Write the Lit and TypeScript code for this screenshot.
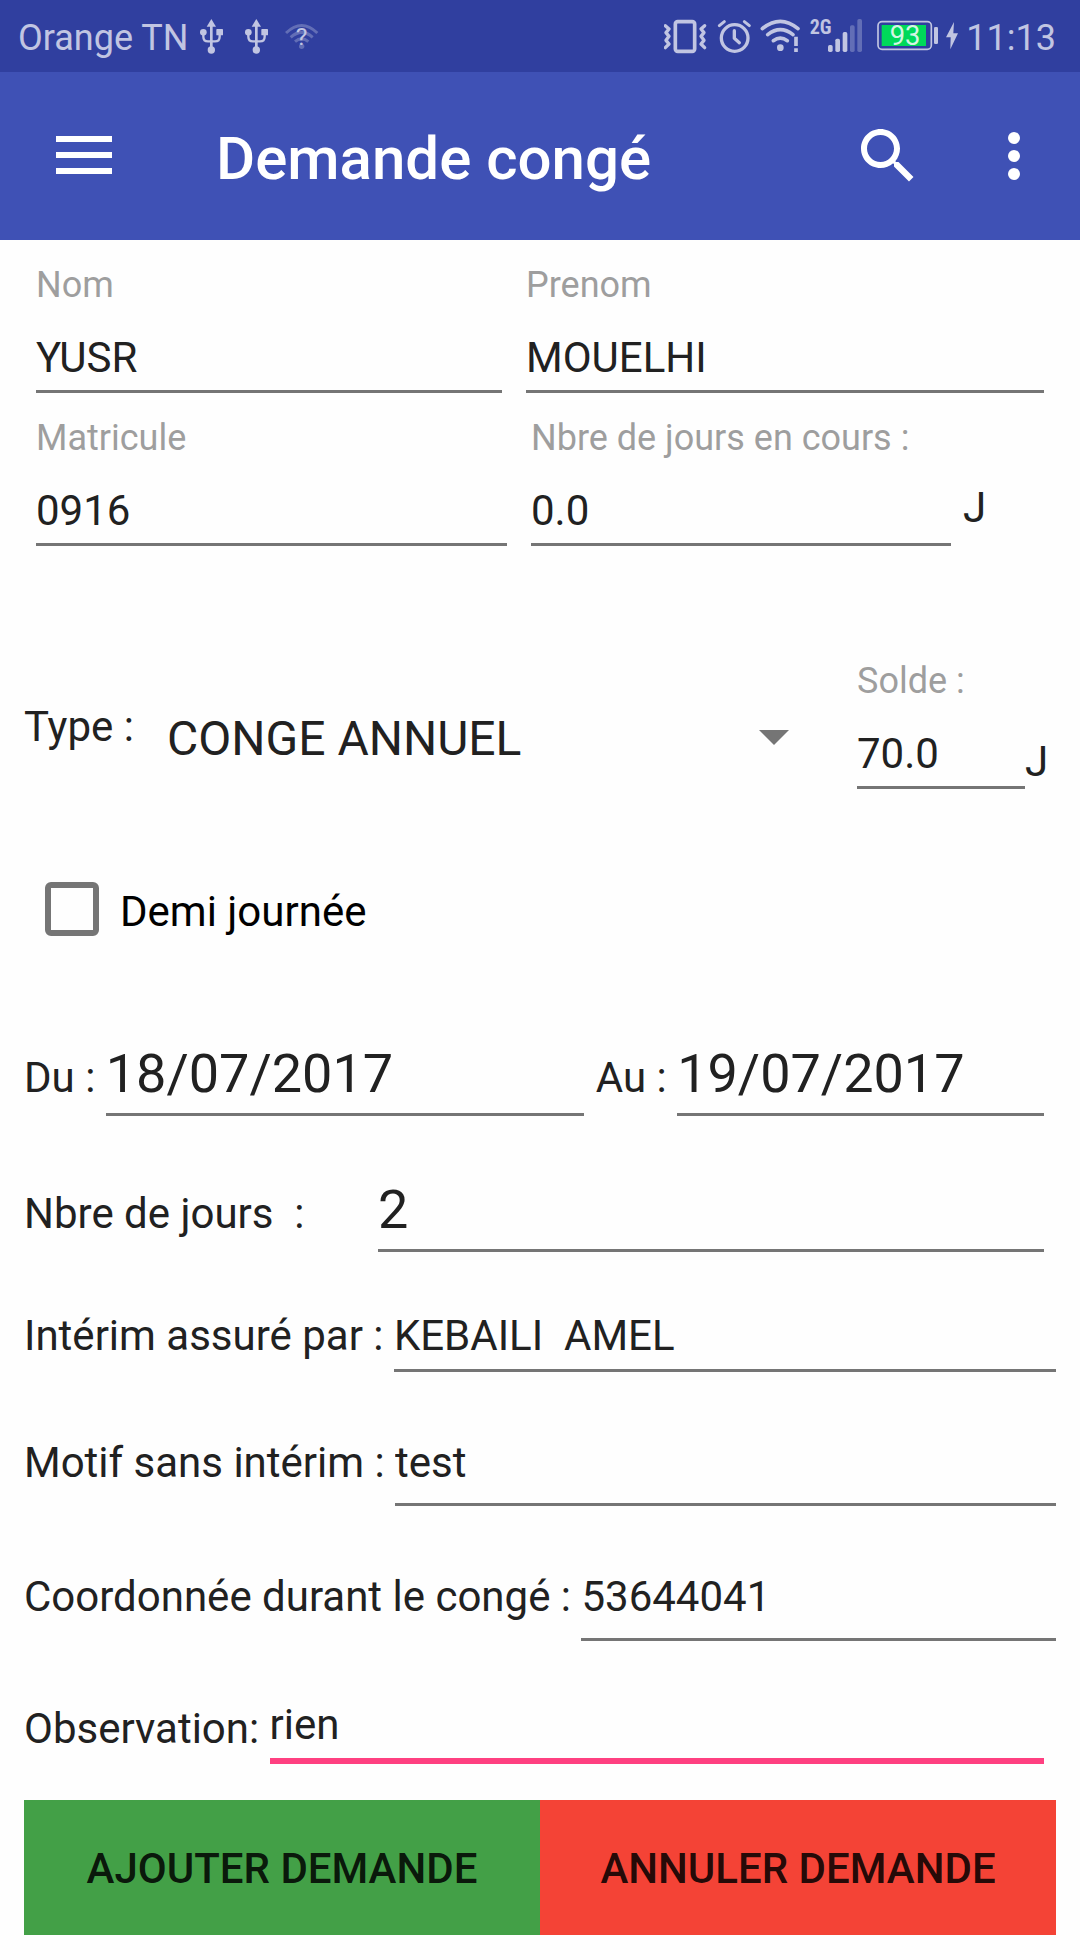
import { LitElement, html, css, svg } from "lit";
import { customElement, property, state } from "lit/decorators.js";

const usbIcon = () => html`
  <svg class="glyph" width="30" height="72" viewBox="585 0 90 216" aria-hidden="true">
    <path class="fill" d="M634 57 648 80H620Z" />
    <circle class="fill" cx="634" cy="150" r="11" />
    <circle class="fill" cx="610" cy="97" r="10" />
    <rect class="fill" x="649" y="87" width="20" height="19" rx="2" />
    <path class="line" stroke-width="8" d="M634 74V146" />
    <path class="line" stroke-width="7" d="M610 100V110Q610 124 624 124H645Q659 124 659 110V100" />
  </svg>
`;

@customElement("status-bar")
export class StatusBar extends LitElement {
  @property() carrier = "";
  @property() time = "";
  @property({ type: Number }) battery = 0;

  static styles = css`
    :host {
      display: flex;
      align-items: center;
      justify-content: space-between;
      height: 72px;
      padding: 0 24px 0 18px;
      background: #303f9f;
      color: #c1c5e2;
      font-size: 36px;
      line-height: 44px;
    }
    .side {
      display: flex;
      align-items: center;
      gap: 8px;
    }
    .icons {
      display: flex;
      gap: 15px;
      margin-left: -1px;
    }
    .text {
      padding-top: 4px;
    }
    .glyph {
      display: block;
      flex: none;
    }
    .fill {
      fill: #c1c5e2;
    }
    .line {
      fill: none;
      stroke: #c1c5e2;
    }
    .round {
      stroke-linecap: round;
      stroke-linejoin: round;
    }
    .faint {
      opacity: 0.35;
    }
    .level {
      fill: #00d95a;
    }
    .percent {
      fill: #d5f5e4;
      font-size: 82px;
    }
    .query {
      fill: #c1c5e2;
      font-size: 74px;
    }
    .network {
      fill: #c1c5e2;
      font-family: "Roboto Condensed", "Liberation Sans Narrow", Roboto, sans-serif;
      font-size: 60px;
      font-weight: 700;
    }
  `;

  render() {
    return html`
      <div class="side">
        <span class="text">${this.carrier}</span>
        <div class="icons">
          ${usbIcon()} ${usbIcon()}
          <svg class="glyph" width="34" height="72" viewBox="854 0 102 216" aria-hidden="true">
            <g class="line faint" stroke-width="9">
              <path d="M857 99Q904 54 951 99" />
              <path d="M871 112Q904 82 937 112" />
              <path d="M884 125Q904 108 924 125" />
            </g>
            <circle class="fill faint" cx="904" cy="139" r="8" />
            <text class="query" x="904" y="134" text-anchor="middle">?</text>
          </svg>
        </div>
      </div>
      <div class="side">
        <svg class="glyph" width="44" height="72" viewBox="72 0 132 216" aria-hidden="true">
          <rect class="line" stroke-width="11" x="106" y="65" width="58" height="89" rx="7" />
          <g class="line round" stroke-width="10">
            <path d="M76 77 87 87 78 98 87 109 78 121 87 132 76 143" />
            <path d="M194 77 183 87 192 98 183 109 192 121 183 132 194 143" />
          </g>
        </svg>
        <svg class="glyph" width="36" height="72" viewBox="228 0 108 216" aria-hidden="true">
          <circle class="line" stroke-width="10" cx="284" cy="114" r="40" />
          <path class="line round" stroke-width="10" d="M283 92V115L298 128" />
          <path class="line round" stroke-width="9" d="M238 77 253 65M328 77 313 65" />
        </svg>
        <svg class="glyph" width="40" height="72" viewBox="360 0 120 216" aria-hidden="true">
          <g class="line round" stroke-width="11">
            <path d="M367 86Q421 42 474 86" />
            <path d="M383 104Q421 74 459 104" />
            <path d="M400 122Q421 107 442 122" />
          </g>
          <circle class="fill" cx="421" cy="143" r="10" />
          <path class="line" stroke-width="11" d="M468 110V138M468 145V156" />
        </svg>
        <svg class="glyph" width="56" height="72" viewBox="504 0 168 216" aria-hidden="true">
          <text class="network" x="509" y="101">2G</text>
          <rect class="fill" x="564" y="135" width="14" height="21" rx="5" />
          <rect class="fill" x="586" y="116" width="14" height="40" rx="5" />
          <rect class="fill" x="608" y="96" width="14" height="60" rx="5" />
          <g class="faint">
            <rect class="fill" x="630" y="76" width="14" height="80" rx="5" />
            <rect class="fill" x="652" y="57" width="14" height="99" rx="5" />
          </g>
        </svg>
        <svg class="glyph" width="66" height="72" viewBox="696 0 198 216" aria-hidden="true">
          <rect class="line" stroke-width="5" x="714" y="65" width="160" height="83" rx="12" />
          <rect class="level" x="725" y="75" width="133" height="63" />
          <rect class="fill" x="882" y="81" width="12" height="51" rx="4" />
          <text class="percent" x="795" y="136" text-anchor="middle">${this.battery}</text>
        </svg>
        <svg class="glyph" width="12" height="72" viewBox="918 0 36 216" aria-hidden="true">
          <path class="fill" d="M942 66 918 112H932L931 148 954 100H940Z" />
        </svg>
        <span class="text">${this.time}</span>
      </div>
    `;
  }
}

@customElement("tool-bar")
export class ToolBar extends LitElement {
  @property() heading = "";

  static styles = css`
    :host {
      display: flex;
      align-items: center;
      height: 168px;
      padding: 0 30px 0 48px;
      box-sizing: border-box;
      background: #3f51b5;
      color: #fff;
    }
    .title {
      flex: 1;
      margin: 0;
      padding: 6px 0 0 96px;
      font-size: 60px;
      font-weight: 500;
      line-height: 72px;
    }
    .actions {
      display: flex;
      gap: 54px;
    }
    .action {
      display: block;
      padding: 0;
      border: 0;
      background: none;
      color: inherit;
    }
    .icon {
      display: block;
      width: 72px;
      height: 72px;
      fill: currentColor;
    }
  `;

  private button(label: string, shape: unknown) {
    return html`
      <button class="action" type="button" aria-label=${label}>
        <svg class="icon" viewBox="0 0 72 72" aria-hidden="true">${shape}</svg>
      </button>
    `;
  }

  render() {
    return html`
      ${this.button("Menu", svg`<path d="M8 16H64V22H8ZM8 32H64V38H8ZM8 48H64V54H8Z" />`)}
      <h1 class="title">${this.heading}</h1>
      <div class="actions">
        ${this.button(
          "Rechercher",
          svg`<path transform="scale(3)" d="M15.5 14h-.79l-.28-.27C15.41 12.59 16 11.11 16 9.5 16 5.91 13.09 3 9.5 3S3 5.91 3 9.5 5.91 16 9.5 16c1.61 0 3.09-.59 4.23-1.57l.27.28v.79l5 4.99L20.49 19l-4.99-5zm-6 0C7.01 14 5 11.99 5 9.5S7.01 5 9.5 5 14 7.01 14 9.5 11.99 14 9.5 14z" />`
        )}
        ${this.button(
          "Plus",
          svg`<circle cx="36" cy="18" r="6" /><circle cx="36" cy="36" r="6" /><circle cx="36" cy="54" r="6" />`
        )}
      </div>
    `;
  }
}

@customElement("app-root")
export class AppRoot extends LitElement {
  @state() private halfDay = false;

  static styles = css`
    :host {
      display: block;
      min-height: 100vh;
      background: #fefefe;
      color: #212121;
      font-family: Roboto, "Liberation Sans", sans-serif;
      font-size: 42px;
      line-height: 48px;
    }
    .form {
      display: flex;
      flex-direction: column;
      padding: 24px;
    }
    .row {
      display: flex;
      align-items: flex-end;
    }
    .inset {
      padding-right: 12px;
    }
    .indent {
      padding-left: 12px;
    }
    .wide {
      gap: 24px;
    }
    .identity {
      margin-bottom: 24px;
    }
    .kind {
      align-items: flex-start;
      margin-top: 114px;
    }
    .half {
      margin-top: 93px;
      padding-left: 21px;
      gap: 21px;
      color: #000;
    }
    .dates {
      align-items: baseline;
      margin-top: 105px;
    }
    .line {
      align-items: baseline;
      margin-top: 60px;
    }
    .spaced {
      margin-top: 67px;
    }
    .total-row,
    .remark {
      margin-top: 61px;
    }
    .field {
      display: flex;
      flex-direction: column;
      gap: 28px;
      min-width: 0;
    }
    .caption {
      color: #9e9e9e;
      font-size: 36px;
      line-height: 42px;
      white-space: nowrap;
    }
    .label {
      flex: none;
      white-space: pre;
    }
    .input {
      flex: 1 1 0;
      width: 100%;
      min-width: 0;
      height: 59px;
      box-sizing: border-box;
      margin: 0;
      padding: 0 0 10px;
      border: 0;
      border-bottom: 3px solid #757575;
      border-radius: 0;
      outline: 0;
      background: none;
      color: inherit;
      font: inherit;
    }
    .field .input {
      flex: none;
    }
    .large {
      height: 75px;
      padding-bottom: 8px;
      font-size: 54px;
      line-height: 64px;
    }
    .tall {
      height: 67px;
      padding-bottom: 18px;
    }
    .active {
      height: 62px;
      border-bottom: 6px solid #ff4081;
    }
    .name {
      flex: 466 1 0;
    }
    .surname {
      flex: 518 1 0;
    }
    .number {
      flex: 471 1 0;
    }
    .count {
      flex: 420 1 0;
    }
    .unit {
      width: 81px;
      padding-bottom: 14px;
    }
    .days {
      gap: 12px;
    }
    .from {
      flex-grow: 477;
    }
    .to {
      flex-grow: 366;
    }
    .until {
      padding-left: 12px;
    }
    .total {
      width: 354px;
    }
    .type {
      padding-top: 43px;
      width: 143px;
      box-sizing: border-box;
    }
    .spinner {
      display: grid;
      flex: 1;
      align-items: center;
      padding-top: 51px;
    }
    .select {
      grid-area: 1 / 1;
      width: 100%;
      margin: 0;
      padding: 0;
      border: 0;
      outline: 0;
      appearance: none;
      background: none;
      color: inherit;
      font: inherit;
      font-size: 48px;
      line-height: 56px;
    }
    .arrow {
      grid-area: 1 / 1;
      justify-self: end;
      pointer-events: none;
      fill: #757575;
    }
    .balance {
      width: 168px;
      margin-left: 68px;
    }
    .after {
      align-self: flex-end;
      width: 31px;
      padding-bottom: 3px;
    }
    .box {
      width: 54px;
      height: 54px;
      box-sizing: border-box;
      margin: 0;
      appearance: none;
      border: 6px solid #757575;
      border-radius: 6px;
      background: none;
    }
    .box:checked {
      border-color: #ff4081;
      background: #ff4081;
    }
    .low {
      padding-bottom: 11px;
    }
    .buttons {
      display: grid;
      grid-template-columns: 1fr 1fr;
      margin-top: 36px;
    }
    .button {
      height: 135px;
      padding: 4px 0 0;
      border: 0;
      color: rgba(0, 0, 0, 0.87);
      font: inherit;
      font-weight: 500;
      text-transform: uppercase;
    }
    .add {
      background: #43a047;
    }
    .cancel {
      background: #f44336;
    }
  `;

  private toggleHalfDay(event: Event) {
    this.halfDay = (event.target as HTMLInputElement).checked;
  }

  render() {
    return html`
      <status-bar carrier="Orange TN" battery="93" time="11:13"></status-bar>
      <tool-bar heading="Demande congé"></tool-bar>
      <form class="form">
        <div class="row wide inset indent identity">
          <div class="field name">
            <label class="caption" for="nom">Nom</label>
            <input class="input" id="nom" type="text" value="YUSR" />
          </div>
          <div class="field surname">
            <label class="caption" for="prenom">Prenom</label>
            <input class="input" id="prenom" type="text" value="MOUELHI" />
          </div>
        </div>

        <div class="row inset indent days">
          <div class="field number">
            <label class="caption" for="matricule">Matricule</label>
            <input class="input" id="matricule" type="text" value="0916" />
          </div>
          <div class="field count indent">
            <label class="caption" for="encours">Nbre de jours en cours :</label>
            <input class="input" id="encours" type="text" value="0.0" />
          </div>
          <span class="unit">J</span>
        </div>

        <div class="row kind">
          <label class="label type" for="type">Type :</label>
          <div class="spinner">
            <select class="select" id="type">
              <option>CONGE ANNUEL</option>
            </select>
            <svg class="arrow" width="30" height="19" viewBox="0 0 30 19" aria-hidden="true">
              <path d="M0 0H30L15 15Z" />
            </svg>
          </div>
          <div class="field balance">
            <label class="caption" for="solde">Solde :</label>
            <input class="input" id="solde" type="text" value="70.0" />
          </div>
          <span class="after">J</span>
        </div>

        <div class="row half">
          <input class="box" id="demi" type="checkbox" .checked=${this.halfDay} @change=${this.toggleHalfDay} />
          <label for="demi">Demi journée</label>
        </div>

        <div class="row inset dates">
          <label class="label" for="du">Du : </label>
          <input class="input large from" id="du" type="text" value="18/07/2017" />
          <label class="label until" for="au">Au : </label>
          <input class="input large to" id="au" type="text" value="19/07/2017" />
        </div>

        <div class="row inset line total-row">
          <label class="label total" for="jours">Nbre de jours  :</label>
          <input class="input large" id="jours" type="text" value="2" />
        </div>

        <div class="row line">
          <label class="label" for="interim">Intérim assuré par : </label>
          <input class="input" id="interim" type="text" value="KEBAILI  AMEL" />
        </div>

        <div class="row line spaced">
          <label class="label" for="motif">Motif sans intérim : </label>
          <input class="input tall" id="motif" type="text" value="test" />
        </div>

        <div class="row line spaced">
          <label class="label" for="coordonnee">Coordonnée durant le congé : </label>
          <input class="input tall" id="coordonnee" type="text" value="53644041" />
        </div>

        <div class="row inset remark">
          <label class="label low" for="observation">Observation: </label>
          <input class="input active" id="observation" type="text" value="rien" />
        </div>

        <div class="buttons">
          <button class="button add" type="button">Ajouter demande</button>
          <button class="button cancel" type="button">Annuler demande</button>
        </div>
      </form>
    `;
  }
}
